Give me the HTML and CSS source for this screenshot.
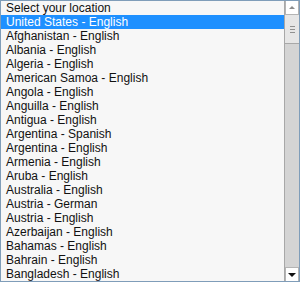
FILE: index.html
```html
<!DOCTYPE html>
<html>
<head>
<meta charset="utf-8">
<link rel="stylesheet" href="styles.css">
</head>
<body>
<div class="listbox">
  <div class="options">
    <div class="opt">Select your location</div>
    <div class="opt selected">United States - English</div>
    <div class="opt">Afghanistan - English</div>
    <div class="opt">Albania - English</div>
    <div class="opt">Algeria - English</div>
    <div class="opt">American Samoa - English</div>
    <div class="opt">Angola - English</div>
    <div class="opt">Anguilla - English</div>
    <div class="opt">Antigua - English</div>
    <div class="opt">Argentina - Spanish</div>
    <div class="opt">Argentina - English</div>
    <div class="opt">Armenia - English</div>
    <div class="opt">Aruba - English</div>
    <div class="opt">Australia - English</div>
    <div class="opt">Austria - German</div>
    <div class="opt">Austria - English</div>
    <div class="opt">Azerbaijan - English</div>
    <div class="opt">Bahamas - English</div>
    <div class="opt">Bahrain - English</div>
    <div class="opt">Bangladesh - English</div>
  </div>
  <div class="scrollbar">
    <div class="btn up"><span class="arrow-up"></span></div>
    <div class="thumb"><span class="grip"></span><span class="grip"></span><span class="grip"></span></div>
    <div class="track"></div>
    <div class="btn down"><span class="arrow-down"></span></div>
  </div>
</div>
</body>
</html>
```
FILE: styles.css
```css
html, body {
  margin: 0;
  padding: 0;
  background: #ffffff;
}
.listbox {
  width: 298px;
  height: 280px;
  border: 1px solid #7f9db9;
  background: #f7f7f7;
  display: flex;
  font-family: "Liberation Sans", Arial, sans-serif;
  font-size: 12px;
  color: #111111;
}
.options {
  flex: 1;
  display: flex;
  flex-direction: column;
  overflow: hidden;
}
.opt {
  height: 14px;
  line-height: 14px;
  padding-left: 5px;
  white-space: nowrap;
}
.opt.selected {
  background: #1e90ff;
  color: #ffffff;
}
.scrollbar {
  width: 14px;
  display: flex;
  flex-direction: column;
  background: #d4d4d4;
  border-left: 1px solid #a8a8a8;
}
.btn {
  height: 13px;
  background: #ffffff;
  border: 1px solid #b4b4b4;
  display: flex;
  align-items: center;
  justify-content: center;
  box-sizing: content-box;
}
.btn.up { border-top: none; }
.btn.down { border-bottom: none; }
.arrow-up {
  width: 0; height: 0;
  border-left: 3px solid transparent;
  border-right: 3px solid transparent;
  border-bottom: 3px solid #8c8c8c;
}
.arrow-down {
  width: 0; height: 0;
  border-left: 4px solid transparent;
  border-right: 4px solid transparent;
  border-top: 4px solid #111111;
}
.thumb {
  height: 28px;
  background: #e6e6e6;
  border-bottom: 1px solid #a8a8a8;
  display: flex;
  flex-direction: column;
  align-items: center;
  justify-content: center;
  gap: 2px;
}
.grip {
  width: 5px;
  height: 1px;
  background: #909090;
}
.track {
  flex: 1;
}
```
